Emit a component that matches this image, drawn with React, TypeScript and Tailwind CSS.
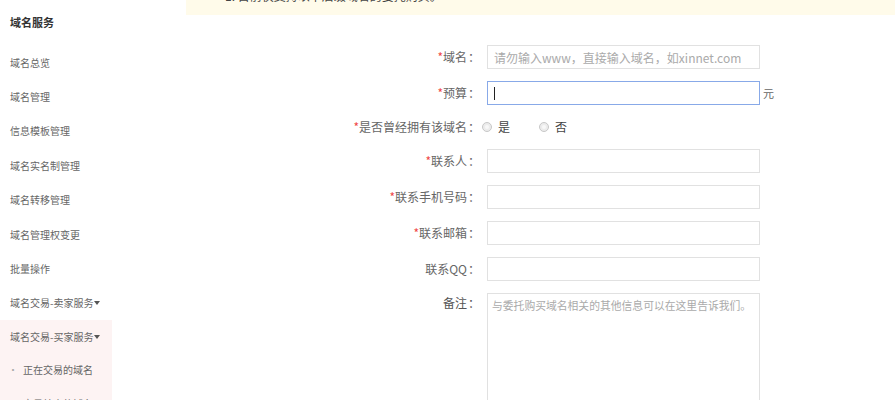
import React from "react";

const menu = [
  "域名总览",
  "域名管理",
  "信息模板管理",
  "域名实名制管理",
  "域名转移管理",
  "域名管理权变更",
  "批量操作",
];

const Caret = () => (
  <span className="inline-block ml-[1px] align-middle w-0 h-0 border-l-[3px] border-r-[3px] border-t-[4px] border-l-transparent border-r-transparent border-t-[#555]" />
);

const Label = ({ text, required }: { text: string; required?: boolean }) => (
  <div className="w-[295px] shrink-0 text-right text-[12px] text-[#666] leading-[24px]">
    {required && <span className="text-[#f04848]">*</span>}
    {text}
    <span className="inline-block w-[14px] text-center">：</span>
  </div>
);

const Field = ({ label, required, placeholder }: { label: string; required?: boolean; placeholder?: string }) => (
  <div className="flex items-center h-[24px] shrink-0">
    <Label text={label} required={required} />
    <input
      placeholder={placeholder}
      className="ml-[6px] w-[273px] h-[24px] border border-[#e1e1e1] px-[6px] text-[12px] text-[#333] placeholder:text-[#aaa] outline-none"
    />
  </div>
);

const Radio = ({ text }: { text: string }) => (
  <label className="flex items-center gap-[6px] text-[12px] text-[#444]">
    <span className="w-[10px] h-[10px] rounded-full border border-[#c8c8c8] bg-[#ececec] flex items-center justify-center">
      <span className="w-[4px] h-[4px] rounded-full bg-[#f8f8f8]" />
    </span>
    {text}
  </label>
);

export default function App() {
  return (
    <div className="w-[895px] h-[400px] overflow-hidden bg-white flex font-['Noto_Sans_CJK_SC',sans-serif]">
      <aside className="w-[112px] shrink-0 flex flex-col overflow-hidden">
        <div className="shrink-0 pl-[10px] pt-[14px] h-[45px] text-[11px] font-bold text-[#333]">域名服务</div>
        {menu.map((m) => (
          <div key={m} className="shrink-0 pl-[10px] h-[34.4px] flex items-center text-[10px] text-[#666]">
            {m}
          </div>
        ))}
        <div className="shrink-0 pl-[10px] h-[34.4px] flex items-center text-[10px] text-[#666]">
          域名交易-卖家服务<Caret />
        </div>
        <div className="shrink-0 bg-[#fdf3f3] h-[120px]">
          <div className="pl-[10px] h-[33px] flex items-center text-[10px] text-[#666]">
            域名交易-买家服务<Caret />
          </div>
          <div className="pl-[8px] h-[33px] flex items-center text-[10px] text-[#666]">
            <span className="w-[15px] text-[#aaa]">•</span>正在交易的域名
          </div>
          <div className="pl-[8px] h-[34px] flex items-center text-[10px] text-[#666]">
            <span className="w-[15px] text-[#aaa]">•</span>交易结束的域名
          </div>
        </div>
      </aside>

      <main className="ml-[74px] flex-1 flex flex-col overflow-hidden">
        <div className="shrink-0 h-[15px] bg-[#fffbea] overflow-hidden">
          <div className="pl-[39px] -mt-[11px] text-[12px] leading-[14px] text-[#444]">
            1. 目前仅支持以下后缀域名的委托购买。
          </div>
        </div>

        <form className="shrink-0 mt-[30px] flex flex-col gap-[12px]">
          <Field label="域名" required placeholder="请勿输入www，直接输入域名，如xinnet.com" />
          <div className="flex items-center h-[24px] shrink-0">
            <Label text="预算" required />
            <div className="ml-[6px] w-[273px] h-[24px] border border-[#88a9e8] flex items-center px-[6px]">
              <span className="w-[1px] h-[13px] bg-[#222]" />
            </div>
            <span className="ml-[3px] text-[11px] text-[#666]">元</span>
          </div>
          <div className="flex items-center h-[20px] shrink-0">
            <Label text="是否曾经拥有该域名" required />
            <div className="ml-[1px] flex items-center gap-[29px]">
              <Radio text="是" />
              <Radio text="否" />
            </div>
          </div>
          <Field label="联系人" required />
          <Field label="联系手机号码" required />
          <Field label="联系邮箱" required />
          <Field label="联系QQ" />
          <div className="flex items-start shrink-0">
            <div className="w-[295px] shrink-0 text-right text-[12px] text-[#555] leading-[20px]">
              备注<span className="inline-block w-[14px] text-center">：</span>
            </div>
            <textarea
              placeholder="与委托购买域名相关的其他信息可以在这里告诉我们。"
              className="ml-[6px] w-[273px] h-[130px] border border-[#e1e1e1] px-[4px] py-[3px] text-[10.8px] leading-[16px] text-[#333] placeholder:text-[#aaa] outline-none resize-none"
            />
          </div>
        </form>
      </main>
    </div>
  );
}
